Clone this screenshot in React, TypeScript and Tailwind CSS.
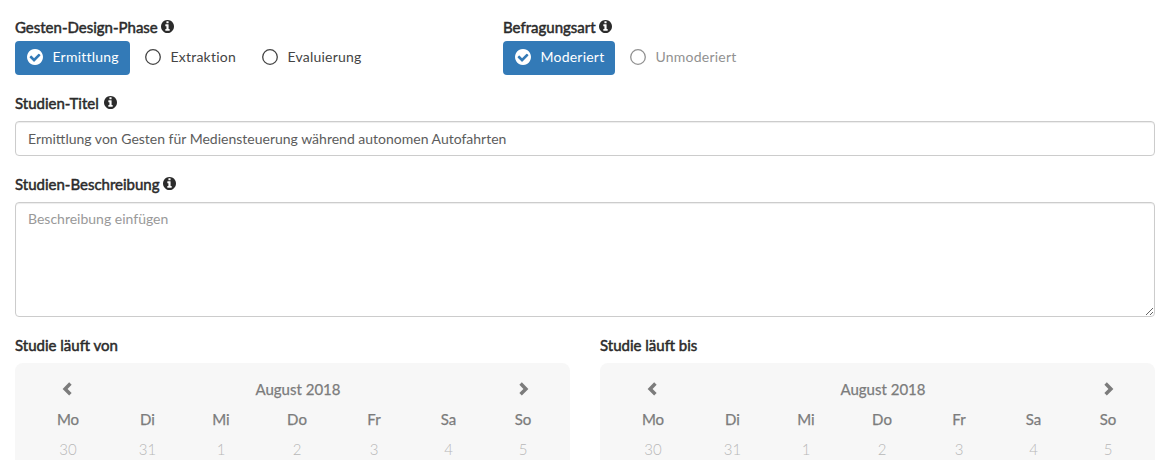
import React from "react";

const DISC =
  "M1664 896q0 209-103 385.5t-279.5 279.5-385.5 103-385.5-103-279.5-279.5-103-385.5 103-385.5 279.5-279.5 385.5-103 385.5 103 279.5 279.5 103 385.5z";

function InfoIcon() {
  return (
    <svg viewBox="128 128 1536 1536" className="-mt-px h-[13px] w-[13px] shrink-0" fill="currentColor" fillRule="evenodd">
      <path
        d={
          "M1152 1376v-160q0-14-9-23t-23-9h-96v-512q0-14-9-23t-23-9h-320q-14 0-23 9t-9 23v160q0 14 9 23t23 9h96v320h-96q-14 0-23 9t-9 23v160q0 14 9 23t23 9h448q14 0 23-9t9-23zM1024 480v-160q0-14-9-23t-23-9h-192q-14 0-23 9t-9 23v160q0 14 9 23t23 9h192q14 0 23-9t9-23z" +
          DISC
        }
      />
    </svg>
  );
}

function CheckIcon() {
  return (
    <svg viewBox="128 128 1536 1536" className="h-4 w-4 shrink-0" fill="currentColor" fillRule="evenodd">
      <path
        d={
          "M1412 734q0-28-18-46l-91-90q-19-19-45-19t-45 19l-408 407-226-226q-19-19-45-19t-45 19l-91 90q-18 18-18 46 0 27 18 45l362 362q19 19 45 19 27 0 46-19l543-543q18-18 18-45z" +
          DISC
        }
      />
    </svg>
  );
}

function RingIcon() {
  return (
    <svg viewBox="0 0 16 16" className="h-4 w-4 shrink-0" fill="none" stroke="currentColor" strokeWidth="1.3">
      <circle cx="8" cy="8" r="7.3" />
    </svg>
  );
}

function Chevron({ right = false }: { right?: boolean }) {
  return (
    <svg
      viewBox="0 0 10 14"
      className={right ? "-mt-px ml-[2px] h-[14px] w-[10px]" : "-mt-px mr-[2px] h-[14px] w-[10px]"}
      fill="none"
      stroke="currentColor"
      strokeWidth="3.5"
      strokeLinejoin="miter"
    >
      <path d={right ? "M1.6 1.6 6.9 6.9 1.6 12.2" : "M8.4 1.6 3.1 6.9l5.3 5.3"} />
    </svg>
  );
}

function Label({ children, info = false, gap = "gap-[3px]" }: { children: string; info?: boolean; gap?: string }) {
  return (
    <div className={`flex h-5 items-center text-[15px] leading-5 text-[#2b2b2b] ${gap}`}>
      <span className="whitespace-nowrap [-webkit-text-stroke:0.5px_currentColor]">{children}</span>
      {info && <InfoIcon />}
    </div>
  );
}

function Choice({ children, active = false, className }: { children: string; active?: boolean; className: string }) {
  return (
    <button
      type="button"
      className={`flex h-[34px] items-center gap-[9.5px] rounded-[4px] pl-3 pb-px text-sm tracking-[0.22px] whitespace-nowrap ${className}`}
    >
      {active ? <CheckIcon /> : <RingIcon />}
      <span>{children}</span>
    </button>
  );
}

const days = ["Mo", "Di", "Mi", "Do", "Fr", "Sa", "So"];
const dates = ["30", "31", "1", "2", "3", "4", "5"];

function Calendar({ label }: { label: string }) {
  return (
    <section className="w-[555px]">
      <Label>{label}</Label>
      <div className="mt-2 grid h-[140px] grid-cols-[82px_77px_70px_82px_72px_77px_72px] grid-rows-[30px_30px_30px] items-center justify-items-center rounded-[8px] bg-[#f7f7f7] pt-[11px] pl-3 text-[15px] text-[#7c7c7c]">
        <Chevron />
        <div className="col-span-5 [-webkit-text-stroke:0.25px_currentColor]">August 2018</div>
        <Chevron right />
        {days.map((d) => (
          <div key={d} className="[-webkit-text-stroke:0.25px_currentColor]">{d}</div>
        ))}
        {dates.map((d) => (
          <div key={d} className="font-light text-[#b8b8b8]">{d}</div>
        ))}
      </div>
    </section>
  );
}

export default function App() {
  return (
    <main className="h-[460px] w-[1170px] overflow-hidden bg-white px-[15px] pt-[17px] font-['Lato',sans-serif]">
      <div className="flex">
        <section className="w-[488px]">
          <Label info>Gesten-Design-Phase</Label>
          <div className="mt-[3.5px] flex">
            <Choice active className="w-[115px] bg-[#337ab7] text-white">Ermittlung</Choice>
            <Choice className="ml-[3px] w-[117px] text-[#444]">Extraktion</Choice>
            <Choice className="text-[#444]">Evaluierung</Choice>
          </div>
        </section>
        <section>
          <Label info>Befragungsart</Label>
          <div className="mt-[3.5px] flex">
            <Choice active className="w-[112px] bg-[#337ab7] text-white">Moderiert</Choice>
            <Choice className="ml-[3px] text-[#919191]">Unmoderiert</Choice>
          </div>
        </section>
      </div>

      <div className="mt-[18.5px]">
        <Label info gap="gap-[5px]">Studien-Titel</Label>
        <input
          type="text"
          defaultValue="Ermittlung von Gesten für Mediensteuerung während autonomen Autofahrten"
          className="mt-2 block h-[35px] w-full rounded-[4px] border border-[#ccc] px-3 text-sm text-[#5c5c5c] shadow-[inset_0_1px_1px_rgba(0,0,0,0.075)] outline-none"
        />
      </div>

      <div className="mt-[18px]">
        <Label info gap="gap-[3px]">Studien-Beschreibung</Label>
        <textarea
          placeholder="Beschreibung einfügen"
          className="mt-2 block h-[115px] w-full resize rounded-[4px] border border-[#ccc] px-3 py-[6px] text-sm leading-5 shadow-[inset_0_1px_1px_rgba(0,0,0,0.075)] outline-none placeholder:text-[#999]"
        />
      </div>

      <div className="mt-[18px] flex gap-[30px]">
        <Calendar label="Studie läuft von" />
        <Calendar label="Studie läuft bis" />
      </div>
    </main>
  );
}
